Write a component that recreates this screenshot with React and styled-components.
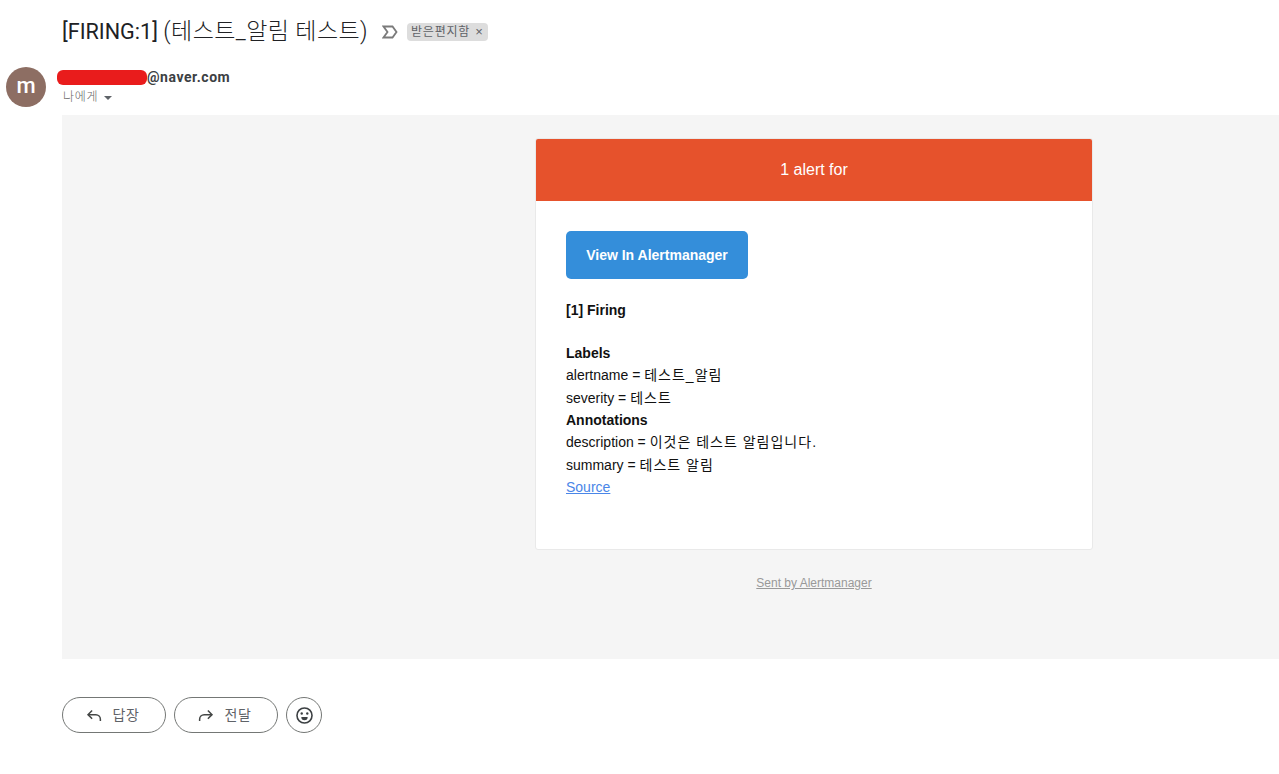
import React from "react";
import styled, { createGlobalStyle } from "styled-components";

const GlobalStyle = createGlobalStyle`
  html, body {
    margin: 0;
    padding: 0;
    background: #fff;
    overflow: hidden;
  }
  body {
    font-family: "Liberation Sans", "Noto Sans CJK KR", Arial, sans-serif;
  }
`;

const KR = `"Roboto", "Noto Sans CJK KR", sans-serif`;
const MAIL = `"Liberation Sans", "Noto Sans CJK KR", sans-serif`;

const Page = styled.div`
  width: 1279px;
  height: 774px;
  overflow: hidden;
  display: flex;
  flex-direction: column;
`;

const SubjectRow = styled.div`
  height: 63px;
  padding-left: 62px;
  display: flex;
  align-items: center;
  box-sizing: border-box;
`;

const Subject = styled.h2`
  margin: 0;
  font: 400 21.6px/28px ${KR};
  color: #202124;
`;

const SubjectKo = styled.span`
  font-size: 23px;
  font-weight: 300;
  letter-spacing: 0.42px;
`;

const ImportanceMark = styled.svg`
  width: 16px;
  height: 14px;
  margin-left: 14px;
  margin-right: 9px;
`;

const Chip = styled.span`
  display: flex;
  align-items: center;
  height: 18px;
  padding: 0 4px;
  border-radius: 4px;
  background: #dddddd;
  font: 400 12px/18px ${KR};
  letter-spacing: 0.8px;
  color: #5f6368;
`;

const ChipClose = styled.span`
  margin-left: 5px;
  font: 400 13px/18px "Liberation Sans", sans-serif;
  color: #5f6368;
`;

const SenderRow = styled.div`
  height: 48px;
  display: flex;
  padding-left: 6px;
  margin-top: 4px;
`;

const Avatar = styled.div`
  width: 40px;
  height: 40px;
  border-radius: 50%;
  background: #8d6e63;
  color: #fff;
  font: 500 22px/38px Roboto, sans-serif;
  text-align: center;
`;

const SenderInfo = styled.div`
  margin-left: 11px;
  display: flex;
  flex-direction: column;
`;

const SenderLine = styled.div`
  display: flex;
  align-items: center;
  height: 20px;
`;

const Redaction = styled.span`
  width: 90px;
  height: 15px;
  border-radius: 6px;
  background: #e91c1c;
`;

const SenderMail = styled.span`
  font: 700 14px/20px Roboto, sans-serif;
  letter-spacing: 0.55px;
  color: #3c4043;
`;

const ToLine = styled.div`
  display: flex;
  align-items: center;
  padding-left: 6px;
  margin-top: 1px;
  height: 18px;
  font: 300 12px/18px ${KR};
  letter-spacing: 0.7px;
  color: #666;
`;

const Caret = styled.span`
  margin-left: 6px;
  margin-top: 2px;
  border-left: 4px solid transparent;
  border-right: 4px solid transparent;
  border-top: 4px solid #5f6368;
`;

// the mail table is wider than the window, so the card centres past the panel's visible middle
const MailBody = styled.div`
  margin-left: 62px;
  width: 1504px;
  height: 544px;
  flex: none;
  background: #f5f5f5;
  padding-top: 23px;
  box-sizing: border-box;
  display: flex;
  flex-direction: column;
  align-items: center;
`;

const Card = styled.div`
  width: 558px;
  height: 412px;
  box-sizing: border-box;
  border: 1px solid #e9e9e9;
  border-radius: 3px;
  background: #fff;
  overflow: hidden;
`;

const CardHeader = styled.div`
  height: 62px;
  background: #e6522c;
  color: #fff;
  font: 400 16px/62px ${MAIL};
  text-align: center;
`;

const CardBody = styled.div`
  padding: 30px;
  font: 400 14px/22.4px ${MAIL};
  color: #111;
`;

const ActionLink = styled.a`
  display: block;
  width: 182px;
  height: 48px;
  border-radius: 5px;
  background: #348eda;
  color: #fff;
  font: 700 14px/48px ${MAIL};
  text-align: center;
  text-decoration: none;
  margin-bottom: 20px;
`;

const Line = styled.div`
  font-weight: ${(p) => (p.$bold ? 700 : 400)};
  margin-bottom: ${(p) => (p.$gap ? "20.4px" : "0")};
`;

const BodyKo = styled.span`
  letter-spacing: 1px;
`;

const SourceLink = styled.a`
  color: #4a86e8;
  text-decoration: underline;
`;

const Footer = styled.a`
  margin-top: 25px;
  font: 400 12px/16px ${MAIL};
  color: #999;
  text-decoration: underline;
`;

const ActionRow = styled.div`
  display: flex;
  gap: 8px;
  padding-left: 62px;
  margin-top: 38px;
`;

const ReplyButton = styled.button`
  width: 104px;
  height: 36px;
  border: 1px solid #747775;
  border-radius: 18px;
  background: #fff;
  padding: 0 4px 0 0;
  display: flex;
  align-items: center;
  justify-content: center;
  gap: 10px;
  font: 400 14px/20px ${KR};
  letter-spacing: 0.5px;
  color: #5f6368;
`;

const EmojiButton = styled(ReplyButton)`
  width: 36px;
  padding: 0;
`;

const ReplyIcon = () => (
  <svg width="18" height="18" viewBox="0 0 24 24" fill="none" stroke="#444746" strokeWidth="2">
    <path d="M9.500 6 4 11.500 9.500 17" />
    <path d="M4 11.500h10.500a6 6 0 0 1 6 6V20" />
  </svg>
);

const ForwardIcon = () => (
  <svg width="18" height="18" viewBox="0 0 24 24" fill="none" stroke="#444746" strokeWidth="2">
    <path d="M14.500 6 20 11.500 14.500 17" />
    <path d="M20 11.500H9.500a6 6 0 0 0-6 6V20" />
  </svg>
);

const SmileIcon = () => (
  <svg width="19" height="19" viewBox="0 0 24 24" fill="none">
    <circle cx="12" cy="12" r="9.500" stroke="#3c4043" strokeWidth="2" />
    <circle cx="8.500" cy="9.500" r="1.500" fill="#3c4043" />
    <circle cx="15.500" cy="9.500" r="1.500" fill="#3c4043" />
    <path d="M8 14h8a4 4 0 0 1-8 0z" fill="#3c4043" />
  </svg>
);

export default function App() {
  return (
    <Page>
      <GlobalStyle />
      <SubjectRow>
        <Subject>[FIRING:1] <SubjectKo>(테스트_알림 테스트)</SubjectKo></Subject>
        <ImportanceMark viewBox="0 0 16 14" fill="none" stroke="#7a7a7a" strokeWidth="1.8">
          <path d="M1.500 1.500h9L14.500 7l-4 5.500h-9L5.500 7z" />
        </ImportanceMark>
        <Chip>
          받은편지함
          <ChipClose>×</ChipClose>
        </Chip>
      </SubjectRow>
      <SenderRow>
        <Avatar>m</Avatar>
        <SenderInfo>
          <SenderLine>
            <Redaction />
            <SenderMail>@naver.com</SenderMail>
          </SenderLine>
          <ToLine>
            나에게
            <Caret />
          </ToLine>
        </SenderInfo>
      </SenderRow>
      <MailBody>
        <Card>
          <CardHeader>1 alert for</CardHeader>
          <CardBody>
            <ActionLink>View In Alertmanager</ActionLink>
            <Line $bold $gap>[1] Firing</Line>
            <Line $bold>Labels</Line>
            <Line>alertname = <BodyKo>테스트_알림</BodyKo></Line>
            <Line>severity = <BodyKo>테스트</BodyKo></Line>
            <Line $bold>Annotations</Line>
            <Line>description = <BodyKo>이것은 테스트 알림입니다.</BodyKo></Line>
            <Line>summary = <BodyKo>테스트 알림</BodyKo></Line>
            <SourceLink>Source</SourceLink>
          </CardBody>
        </Card>
        <Footer>Sent by Alertmanager</Footer>
      </MailBody>
      <ActionRow>
        <ReplyButton><ReplyIcon />답장</ReplyButton>
        <ReplyButton><ForwardIcon />전달</ReplyButton>
        <EmojiButton><SmileIcon /></EmojiButton>
      </ActionRow>
    </Page>
  );
}
